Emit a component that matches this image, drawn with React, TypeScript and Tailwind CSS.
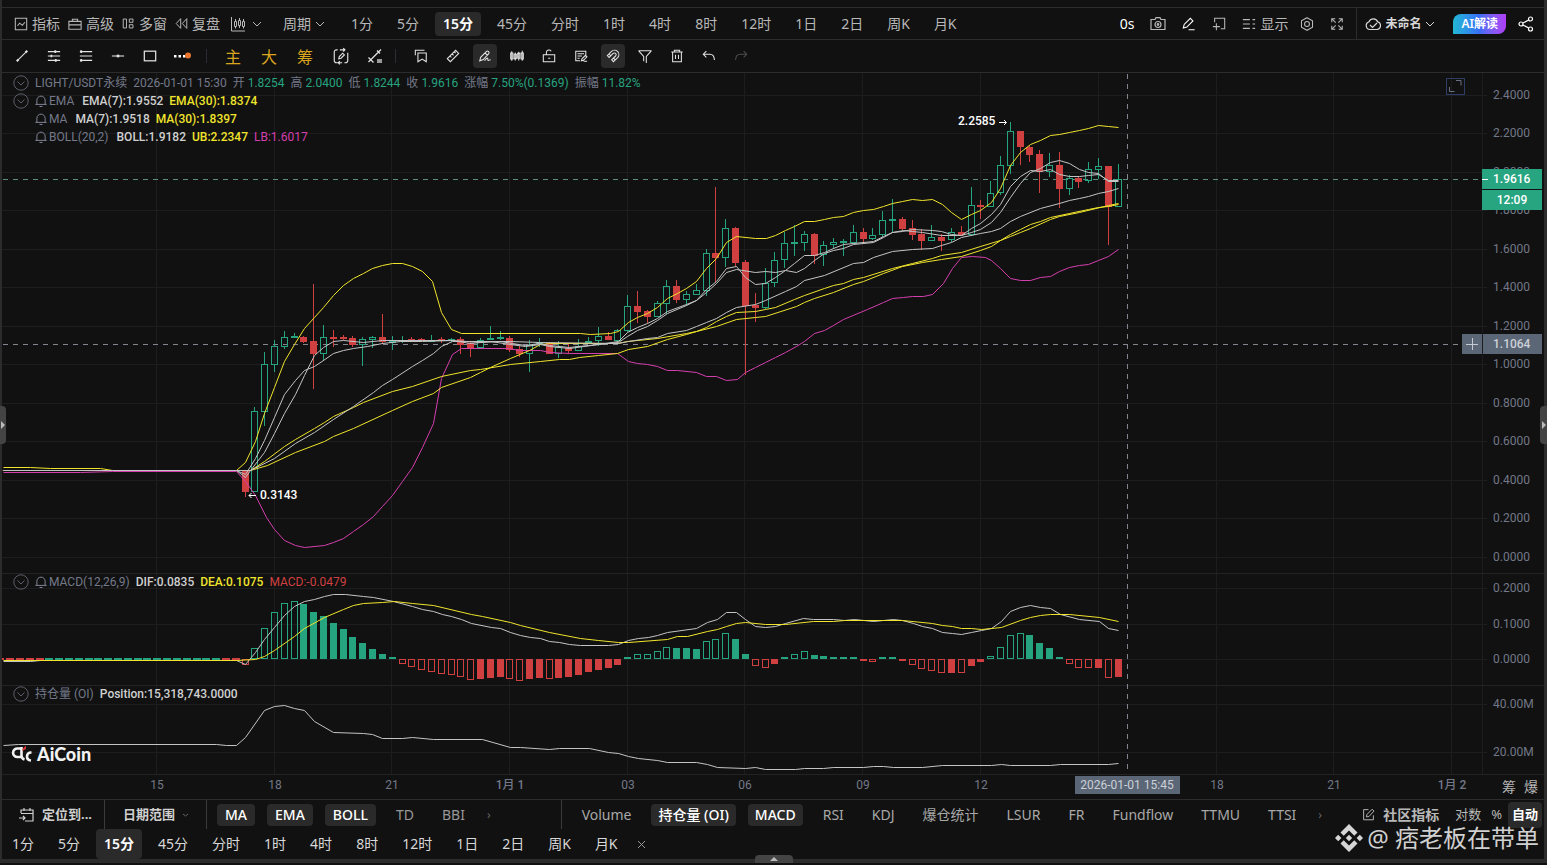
import React, { useState } from 'react';

const periods = ['1分', '5分', '15分', '45分', '分时', '1时', '4时', '8时', '12时', '1日', '2日', '周K', '月K'];
const mainIndicators = ['MA', 'EMA', 'BOLL', 'TD', 'BBI'];
const subIndicators = ['Volume', '持仓量 (OI)', 'MACD', 'RSI', 'KDJ', '爆仓统计', 'LSUR', 'FR', 'Fundflow', 'TTMU', 'TTSI'];

const GREEN = '#26a480';
const RED = '#d04040';
const YELLOW = '#f0e42c';
const WHITE = '#c4c4c4';
const PINK = '#d43fae';
const AXIS = '#737888';

const STEP = 9.81;
const xAt = (i: number) => Math.round(274 + STEP * i) + 0.5;

// [high, body top, body bottom, low, up] in chart units, first one is 17:15
const candles: [number, number, number, number, number][] = [
  [471, 471, 492, 497, 0], [407, 411, 492, 492, 1], [352, 364, 412, 426, 1], [340, 346, 365, 372, 1],
  [331, 337, 347, 349, 1], [333, 336, 337, 338, 1], [336, 337, 342, 343, 0], [284, 341, 354, 389, 0],
  [325, 337, 354, 361, 1], [330, 337, 339, 347, 0], [335, 337, 339, 340, 0], [336, 338, 345, 347, 0],
  [337, 339, 345, 366, 1], [336, 337, 340, 348, 1], [314, 337, 342, 344, 0], [336, 341, 342, 350, 1],
  [336, 340, 341, 343, 1], [337, 339, 341, 341, 0], [338, 339, 341, 342, 0], [335, 340, 341, 342, 1],
  [337, 339, 341, 343, 0], [338, 339, 341, 342, 1], [337, 339, 345, 354, 0], [342, 343, 348, 357, 0],
  [338, 340, 348, 348, 1], [326, 338, 340, 340, 1], [331, 337, 338, 340, 1], [336, 338, 350, 352, 0],
  [346, 349, 354, 357, 0], [340, 345, 354, 372, 1], [338, 342, 344, 347, 1], [342, 343, 354, 354, 0],
  [341, 347, 354, 358, 1], [343, 348, 351, 353, 0], [339, 346, 351, 351, 1], [337, 341, 342, 344, 1],
  [327, 336, 341, 346, 1], [332, 336, 340, 340, 0], [329, 330, 341, 342, 1], [295, 306, 331, 332, 1],
  [291, 306, 312, 323, 0], [310, 311, 317, 323, 0], [301, 303, 317, 317, 1], [280, 286, 304, 314, 1],
  [280, 286, 300, 303, 0], [291, 294, 300, 306, 1], [284, 290, 295, 295, 1], [249, 253, 291, 296, 1],
  [187, 253, 258, 282, 0], [219, 228, 258, 267, 1], [227, 228, 263, 266, 0], [260, 262, 306, 375, 0],
  [293, 305, 308, 322, 0], [268, 283, 308, 309, 1], [252, 260, 283, 287, 1], [232, 243, 260, 268, 1],
  [225, 242, 243, 256, 1], [231, 234, 243, 251, 1], [233, 234, 256, 264, 0], [241, 245, 255, 266, 1],
  [238, 242, 245, 249, 1], [239, 241, 242, 256, 1], [225, 232, 243, 244, 1], [228, 232, 239, 244, 0],
  [228, 235, 239, 240, 1], [211, 220, 235, 237, 1], [199, 219, 220, 232, 1], [217, 219, 229, 230, 0],
  [220, 228, 235, 240, 0], [229, 234, 241, 250, 0], [225, 237, 241, 241, 1], [234, 237, 241, 251, 0],
  [228, 232, 240, 242, 1], [226, 232, 235, 236, 0], [187, 205, 235, 236, 1], [200, 205, 207, 219, 0],
  [181, 193, 207, 207, 1], [156, 165, 193, 195, 1], [122, 131, 166, 174, 1], [131, 131, 147, 165, 0],
  [145, 147, 155, 162, 0], [150, 154, 172, 193, 0], [153, 165, 172, 177, 1], [152, 165, 189, 208, 0],
  [175, 178, 189, 195, 1], [177, 178, 182, 188, 0], [162, 169, 181, 183, 1], [158, 166, 170, 179, 1],
  [166, 166, 207, 245, 0], [164, 179, 207, 207, 1],
];

const upper = '3,467 30,467 50,468 100,468 112,470 236,470 245,462 255,441 264,413 274,387 284,361 294,344 304,328 314,317 323,307 333,295 343,285 353,278 363,273 372,268 382,265 392,263 402,263 412,266 422,271 432,281 441,312 451,329 461,333 580,333 590,334 610,333 618,331 628,322 637,317 647,313 657,307 667,298 677,293 686,288 696,281 706,268 716,258 726,242 736,236 755,238 766,238 775,235 785,230 794,226 804,221 814,221 824,219 833,217 843,216 853,212 863,210 873,209 883,206 892,203 902,201 912,199 922,200 932,199 942,204 951,212 961,219 971,214 980,210 991,202 1000,188 1010,165 1020,152 1030,144 1040,140 1050,135 1059,134 1069,132 1079,130 1088,128 1098,125 1108,126 1118,127';
const lower = '3,472 80,472 112,471 236,471 245,481 255,495 266,517 274,529 284,540 295,545 304,547 324,545 333,542 343,538 353,531 363,524 373,516 382,506 392,495 402,481 412,467 422,447 433,423 441,378 452,354 461,348 507,348 520,350 540,350 550,352 569,353 617,353 628,361 637,363 647,364 657,366 667,370 677,370 696,372 706,376 716,376 726,380 737,379 745,372 755,367 765,362 775,357 785,352 796,346 804,341 814,333 824,330 833,325 843,319 867,309 883,302 892,298 903,297 912,296 923,296 932,294 943,283 952,268 961,257 972,256 985,257 991,260 1000,268 1010,278 1020,280 1030,280 1040,277 1050,276 1059,271 1069,267 1079,265 1088,264 1098,260 1108,256 1118,249';
const ema7 = '3,470 236,470 245,474 255,458 264,440 274,417 284,394 295,380 304,370 314,366 323,360 333,353 343,350 353,348 367,346 382,343 400,341 422,341 452,340 480,342 500,341 512,343 525,345 539,343 549,345 569,347 598,344 618,341 627,332 637,327 647,323 657,318 667,311 686,304 696,300 706,289 716,281 726,268 736,266 745,277 755,284 765,283 775,277 785,270 794,263 804,255 814,255 824,252 833,248 843,244 853,243 873,241 883,236 892,232 903,230 912,231 922,232 941,235 961,235 971,228 980,223 991,214 1000,204 1010,186 1020,176 1030,170 1040,171 1050,169 1059,174 1069,176 1079,176 1088,175 1098,174 1108,180 1118,180';
const ma7 = '3,470 236,470 245,477 250,470 264,452 274,433 284,413 295,394 304,375 314,355 323,347 333,341 343,340 363,342 382,340 422,340 452,340 470,343 490,341 510,344 525,346 540,344 549,346 569,348 598,344 618,342 627,336 637,330 647,326 657,320 667,313 686,305 696,300 706,292 716,283 726,272 736,269 755,272 765,271 775,272 785,270 796,272 804,268 814,260 824,253 833,250 843,248 853,244 873,242 883,237 892,232 902,231 912,229 932,230 941,231 951,234 961,235 971,232 980,229 991,222 1000,212 1010,197 1020,183 1030,172 1040,168 1050,162 1059,160 1069,163 1079,169 1088,172 1098,173 1108,181 1118,181';
const bollMid = '3,470 236,470 250,470 274,458 295,443 314,432 333,419 353,406 373,392 382,385 392,379 412,366 422,360 433,353 441,346 452,341 510,341 540,342 618,343 628,341 647,338 657,337 667,333 686,330 696,326 706,322 716,318 726,312 736,307 755,304 765,300 785,291 796,286 804,280 824,275 853,263 863,262 873,257 892,251 912,249 932,248 941,245 951,242 961,237 980,233 991,231 1000,228 1010,221 1020,216 1040,208 1059,203 1069,200 1079,198 1088,196 1098,193 1108,191 1118,188';
const ema30 = '3,470 236,470 250,470 264,461 284,446 295,439 314,428 324,422 333,416 353,407 363,402 392,391 412,386 441,376 470,370 480,369 510,364 540,361 559,359 569,359 579,357 598,355 617,353 628,349 647,346 667,339 686,334 696,331 716,326 736,319 755,317 765,316 796,306 804,302 814,298 833,292 853,284 863,281 883,273 902,266 922,262 941,259 961,256 980,250 991,246 1000,240 1010,234 1020,229 1030,224 1040,221 1050,217 1069,213 1088,209 1098,207 1108,206 1118,204';
const ma30 = '3,470 236,470 250,470 267,465 295,452 324,441 333,436 353,428 392,410 412,401 433,393 441,387 470,377 480,372 490,367 510,358 529,350 540,344 550,343 617,343 627,341 657,338 686,333 696,331 706,327 716,321 726,316 736,312 755,311 765,309 775,307 794,299 804,295 824,288 833,285 843,283 853,279 863,277 892,268 912,263 932,258 941,255 961,252 980,246 1000,240 1010,236 1020,232 1030,228 1050,219 1059,216 1079,212 1108,205 1118,203';

const dif = '3,661 30,661 40,660 236,660 245,664 255,652 264,639 274,627 284,615 294,606 304,601 314,599 324,596 333,594 345,594 363,596 373,597 393,601 412,606 422,609 433,611 442,614 451,616 461,619 471,623 491,627 500,628 510,632 520,635 530,637 540,638 549,641 559,642 569,644 580,645 608,645 618,644 628,640 638,638 648,637 657,635 667,632 696,628 707,622 717,619 726,612 736,612 745,619 755,626 765,627 775,626 785,623 803,618 813,619 833,619 844,620 854,619 873,621 893,619 902,620 913,623 922,626 932,628 942,632 952,633 961,634 971,632 981,630 991,628 1001,621 1010,611 1020,607 1030,605 1040,607 1050,608 1060,614 1079,619 1099,621 1108,628 1118,630';
const dea = '3,660 236,660 255,659 264,656 274,650 294,636 304,628 324,617 343,609 353,605 363,603 382,602 394,601 412,603 433,605 471,614 482,616 510,622 520,625 549,632 580,638 598,640 618,642 628,642 667,639 677,636 687,636 707,631 717,629 726,626 736,623 745,622 765,624 785,624 813,621 833,621 844,620 902,620 932,623 942,625 952,626 961,628 971,628 981,629 1001,627 1020,620 1030,617 1040,615 1050,614 1069,614 1099,617 1118,621';
const position = '3,745 18,744 216,744 226,745 236,745 245,737 264,710 274,706 284,705 294,708 304,710 314,721 333,732 363,733 372,734 382,738 402,738 412,737 433,739 482,739 510,747 520,747 549,749 559,748 589,748 608,752 618,753 628,756 638,758 657,760 667,762 696,762 707,764 717,767 745,768 755,767 765,769 795,769 804,768 823,768 833,767 863,767 873,766 883,766 893,767 922,767 942,765 991,765 1001,764 1010,765 1050,765 1060,764 1108,764 1118,763';

// histogram edge for each bar from 17:15 on; negative sign = drawn hollow
const histogram = [
  -665, -648, -628, -612, -603, -601, 604, 612, 616, 623, 629, 637, 643, 649, 654, 657,
  -664, -667, -670, -672, -674, -675, -677, -680, 679, 678, 677, -679, -681, 679, 678, -679, 678, 677, 675, 672, 670, 668, 665,
  657, -654, -654, -651, -647, 648, 648, 649, -641, -639, -633, 639, 654, -666, -668, 664,
  657, -654, -651, 655, 656, 657, 657, 657, 661, -662, 657, 657, 661, -665, -669, -671, -673, 673, -673, 666, 662,
  -656, -647, -635, -633, 635, 643, 648, 657, -664, -668, -668, 668, -678, 677,
];

const timeTicks: [number, string][] = [
  [157, '15'], [275, '18'], [392, '21'], [510, '1月 1'], [628, '03'], [745, '06'], [863, '09'], [981, '12'],
  [1099, ''], [1217, '18'], [1334, '21'], [1452, '1月 2'],
];
const priceTicks: [number, string][] = [
  [95, '2.4000'], [133, '2.2000'], [172, '2.0000'], [210, '1.8000'], [249, '1.6000'], [287, '1.4000'], [326, '1.2000'],
  [364, '1.0000'], [403, '0.8000'], [441, '0.6000'], [480, '0.4000'], [518, '0.2000'], [557, '0.0000'],
  [588, '0.2000'], [624, '0.1000'], [659, '0.0000'], [704, '40.00M'], [752, '20.00M'],
];

interface IconProps {
  size?: number;
  className?: string;
  children: React.ReactNode;
}

const Icon = ({ size = 16, className = '', children }: IconProps) => (
  <svg width={size} height={size} viewBox="0 0 16 16" fill="none" stroke="currentColor" strokeWidth="1.2" className={`shrink-0 ${className}`} aria-hidden="true">
    {children}
  </svg>
);

const Chevron = ({ className = '' }: { className?: string }) => (
  <svg width="10" height="10" viewBox="0 0 10 10" fill="none" stroke="currentColor" className={`shrink-0 ${className}`} aria-hidden="true">
    <path d="M1 3l4 4 4-4" />
  </svg>
);

const Fold = () => (
  <button type="button" aria-label="折叠" className="w-4 h-4 text-[#5c5f69]">
    <Icon>
      <circle cx="8" cy="8" r="7.2" strokeWidth="1" />
      <path d="M4.5 6.5L8 10l3.5-3.5" strokeWidth="1" />
    </Icon>
  </button>
);

const Bell = () => (
  <Icon size={12} className="text-[#84899a]">
    <path d="M0.500 12.500h15M2.500 12.500V7a5.500 5.500 0 0111 0v5.500M6 15.300h4" strokeWidth="1.3" />
  </Icon>
);

const Line = ({ points, color }: { points: string; color: string }) => (
  <polyline points={points} fill="none" stroke={color} strokeWidth="1" transform="translate(0.5 0.5)" />
);

const drawTools = [
  <Icon><path d="M3.5 12.5l9-9" /><path d="M2 14l2-2M12 4l2-2" strokeWidth="2.4" /></Icon>,
  <Icon><path d="M1 3h14M1 8h14M1 13h14" /><path d="M8.500 3h2M4 8h2M9 13h2" strokeWidth="3" /></Icon>,
  <Icon><path d="M1 3h14M1 8h14M1 13h14" /><path d="M1.500 3h2M1.500 13h2" strokeWidth="3" /></Icon>,
  <Icon><path d="M1 8h14" /><path d="M6.500 8h3" strokeWidth="3" /></Icon>,
  <Icon><rect x="1.500" y="2.500" width="13" height="11" strokeWidth="1.4" /></Icon>,
];

const editTools = [
  { name: '收藏', icon: <Icon><path d="M1.500 7V1.500H12M4.500 4.500h9.500v10l-4.700-3-4.800 3z" /></Icon> },
  { name: '测量', icon: <Icon><path d="M1.500 11L11 1.500 14.500 5 5 14.500z M4.500 8l1.700 1.700M7 5.500l1.700 1.700M9.500 3.200l1.500 1.500" /></Icon> },
  { name: '连续画线', active: true, icon: <Icon><path d="M2 13.500l1-4L9.500 3a1.800 1.800 0 012.600 2.600L6 12l-4 1.500zM8 4.500l2.700 2.700M7.500 13.500c1-1.500 2.500-3.500 3.500-3s-.5 2.700.7 2.700 1.300-1 2.800-1" /></Icon> },
  { name: 'K线样式', icon: <Icon><path d="M2 2.500v11M6 4v9M10 3v10M14 2v11.500" /><path d="M.8 4.500h2.400v7H.8zM4.800 6h2.400v5H4.800zM8.800 5h2.400v5.500H8.800zM12.800 4.500h2.400v7h-2.400z" /></Icon> },
  { name: '锁定', icon: <Icon><path d="M1.500 6.500h13v8h-13zM5 6.500V4a3 3 0 015.500-1.500M7 10.500h2.500" /></Icon> },
  { name: '备注', icon: <Icon><path d="M7 13.500H2V2.500h11.500V7M4 5.500h7.500M4 8h5M4 10.500h2.500M8.500 13.500l.6-2.300 4-4 1.700 1.700-4 4zM11 14h4" /></Icon> },
  { name: '磁吸', active: true, icon: <Icon><path d="M1.500 7.500L6 3a5 5 0 017.300 7l-4.800 4.500-2-2.200L11 8a2 2 0 00-2.900-2.900L3.600 9.700zM3.500 5.700l2 2.200M8.500 10.200l2 2.300" /></Icon> },
  { name: '筛选', icon: <Icon><path d="M0.500 2h15M1 2.500l5.500 6v5.500M15 2.500l-5.500 6V16" /></Icon> },
  { name: '删除', icon: <Icon><path d="M1.500 3.500h13M5 3.500v-2h6v2M3 3.500v11h10v-11M6.300 6.500v5M9.700 6.500v5" /></Icon> },
  { name: '撤销', icon: <Icon><path d="M5 2.500L1.500 6 5 9.500M1.500 6H9c3 0 5 2 5.200 6.500" /></Icon> },
  { name: '重做', dim: true, icon: <Icon><path d="M11 2.500L14.500 6 11 9.500M14.500 6H7C4 6 2 8 1.800 12.500" /></Icon> },
];

const Chart = () => (
  <svg viewBox="2 73 1542 726" className="block w-full font-[Roboto,'Noto_Sans_CJK_SC',sans-serif] text-[12px]" role="img" aria-label="LIGHT/USDT K线图">
    <g stroke="#1d1d20" shapeRendering="crispEdges">
      {priceTicks.map(([y], i) => <path key={i} d={`M2 ${y + 0.5}H1487`} />)}
      {timeTicks.map(([x]) => <path key={x} d={`M${x - 0.5} 73V774`} />)}
      <path d="M1482.5 73V774" />
      <path d="M2 573.500H1544M2 685.500H1544M2 774.500H1544" stroke="#232326" />
    </g>

    <path d="M3 179.500H1482" stroke="#5d8f80" strokeDasharray="5 5" />
    <path d="M3 344.500H1460M1127.500 74V774" stroke="#85858f" strokeDasharray="5 5" />

    {/* flat part before the first move */}
    {Array.from({ length: 25 }, (_, n) => (
      <path key={n} d={`M${xAt(n - 28) - 4} 470.5h7`} stroke={n < 6 ? RED : GREEN} />
    ))}
    <g shapeRendering="crispEdges">
      {candles.map(([high, top, bottom, low, up], n) => {
        const x = xAt(n - 3);
        return (
          <g key={n} stroke={up ? GREEN : RED}>
            <path d={up ? `M${x} ${high}V${top}M${x} ${bottom}V${low}` : `M${x} ${high}V${low}`} />
            <rect x={x - 3} y={top + 0.5} width="6" height={Math.max(bottom - top - 1, 1)} fill={up ? 'none' : RED} />
          </g>
        );
      })}
    </g>
    <Line points={upper} color={YELLOW} />
    <Line points={lower} color={PINK} />
    <Line points={ema30} color={YELLOW} />
    <Line points={ma30} color={YELLOW} />
    <Line points={bollMid} color={WHITE} />
    <Line points={ema7} color={WHITE} />
    <Line points={ma7} color={WHITE} />

    <g fill="#fff" className="font-medium">
      <text x="958" y="125">2.2585</text>
      <text x="260" y="499">0.3143</text>
    </g>
    <path d="M999 122.500h7M1004 120l2.500 2.500-2.500 2.500M256 495.500h-7M251.500 493l-2.500 2.500 2.500 2.500" stroke="#fff" fill="none" />

    <g shapeRendering="crispEdges">
      {Array.from({ length: 25 }, (_, n) => (
        <path key={n} d={`M${xAt(n - 28) - 4} 659h8`} stroke={n < 5 || n > 22 ? RED : GREEN} strokeWidth="2" />
      ))}
      {histogram.map((v, n) => {
        const edge = Math.abs(v);
        const color = edge < 659 ? GREEN : RED;
        return (
          <rect
            key={n}
            x={xAt(n - 3) - 3}
            y={Math.min(edge, 659) + 0.5}
            width="6"
            height={Math.max(Math.abs(659 - edge) - 1, 1)}
            stroke={color}
            fill={v < 0 ? 'none' : color}
          />
        );
      })}
    </g>
    <Line points={dif} color={WHITE} />
    <Line points={dea} color={YELLOW} />
    <Line points={position} color={WHITE} />

    <g fill={AXIS}>
      {priceTicks.map(([y, label], i) => <text key={i} x="1493" y={y + 4}>{label}</text>)}
      {timeTicks.map(([x, label]) => <text key={x} x={x} y="789" textAnchor="middle" className={label.length > 2 ? 'font-medium' : ''}>{label}</text>)}
    </g>

    <path d="M1482 169h60v20h-60zM1482 190h60v20h-60z" fill="#27a480" />
    <path d="M1482 179.500h6" stroke="#fff" />
    <path d="M1462 334h20v20h-20zM1483 334h59v20h-59zM1075 776h105v18h-105z" fill="#5b6677" />
    <path d="M1466 344.500h12M1472.500 338v12" stroke="#c5cad2" />
    <g className="font-medium">
      <text x="1493" y="183" fill="#fff">1.9616</text>
      <text x="1512" y="204" fill="#fff" textAnchor="middle">12:09</text>
      <text x="1493" y="348" fill="#ccd0d6">1.1064</text>
      <text x="1127" y="789" fill="#ccd0d6" textAnchor="middle" className="font-normal">2026-01-01 15:45</text>
    </g>
    <g fill="#b5b5b5" className="text-[14px]">
      <text x="1502" y="792">筹</text>
      <text x="1524" y="792">爆</text>
    </g>

    <rect x="1446.500" y="78.500" width="18" height="16" fill="none" stroke="#2f3c63" />
    <path d="M1456 80.500h5v5M1449.500 87v4.500h5" fill="none" stroke="#6b7180" />

    {/* AiCoin mark */}
    <g fill="none" stroke="#f2f2f2" strokeWidth="2.600">
      <path d="M21 748.500h-3a4.300 4.300 0 100 8.500h3M21.500 747v8.500q0 3 3 4" />
      <path d="M31.500 752.500h-1q-3.500 .5-3.500 4t4 4" />
    </g>
    <path d="M22.500 749l3.500-3.500v3.500l-3.500 2z" fill="#d33434" />
    <text x="37" y="761" fill="#f2f2f2" className="font-[Lato,sans-serif] text-[18px] font-black">AiCoin</text>
  </svg>
);

const quote = [
  ['开', '1.8254'], ['高', '2.0400'], ['低', '1.8244'], ['收', '1.9616'], ['涨幅', '7.50%(0.1369)'], ['振幅', '11.82%'],
];

const App: React.FC = () => {
  const [period, setPeriod] = useState('15分');
  const [main, setMain] = useState(['MA', 'EMA', 'BOLL']);
  const [sub, setSub] = useState(['持仓量 (OI)', 'MACD']);

  const toggle = (list: string[], name: string) =>
    list.includes(name) ? list.filter(n => n !== name) : [...list, name];

  return (
    <div className="relative min-h-screen flex flex-col bg-[#111111] text-[#b8b8b8] text-sm whitespace-nowrap overflow-hidden font-['Noto_Sans','Noto_Sans_CJK_SC',sans-serif]">
      <div className="border-l-2 border-r-3 border-[#2c2c2c]">
        <div className="h-2 border-b border-[#2c2c2c]" />

        <header className="h-8 flex items-center border-b border-[#2c2c2c] pl-3">
          <div className="flex items-center gap-2">
            <button type="button" className="flex items-center gap-1">
              <Icon size={14}><path d="M1.500 1.500h13v13h-13zM4 10l2.500-3 3 2.500L12.500 6" /></Icon>指标
            </button>
            <button type="button" className="flex items-center gap-1">
              <Icon size={14}><path d="M1 5h14v9H1zM5 5V2.500h6V5M1 9h14" /></Icon>高级
            </button>
            <button type="button" className="flex items-center gap-1">
              <Icon size={13}><path d="M1.500 2.500h4v11h-4zM9 2.500h4.500v4H9zM9 9.500h4.500v4H9z" /></Icon>多窗
            </button>
            <button type="button" className="flex items-center gap-1">
              <Icon size={13}><path d="M7 2L1.500 8 7 14zM14.500 2L9 8l5.500 6z" /></Icon>复盘
            </button>
          </div>
          <button type="button" aria-label="K线类型" className="flex items-center gap-1.5 ml-2.5">
            <Icon><path d="M1.500 1v14H15M4.500 5.500h2v5h-2zM8.500 4.500h2v5h-2zM12.500 5.500h2v5h-2zM5.500 3v2.500M9.500 2v2.500M13.500 3v2.500M5.500 10.500v2M9.500 9.500v2.500M13.500 10.500v2" strokeWidth="1" /></Icon>
            <Chevron />
          </button>
          <button type="button" className="flex items-center gap-1 ml-[21px]">周期<Chevron /></button>
          <nav className="flex items-center ml-3.5">
            {periods.map(p => (
              <button
                key={p}
                type="button"
                onClick={() => setPeriod(p)}
                className={`mx-1 px-2 h-6 rounded ${p === period ? 'bg-[#2a2a2a] text-white font-semibold' : ''}`}
              >
                {p}
              </button>
            ))}
          </nav>
          <div className="flex items-center ml-auto h-full">
            <span className="text-white mr-4">0s</span>
            <button type="button" aria-label="截图" className="mr-4"><Icon><path d="M1 3.500h4l1-1.800h4l1 1.800h4v10H1z" /><circle cx="8" cy="8.500" r="3" /><circle cx="8" cy="8.500" r=".8" /></Icon></button>
            <button type="button" aria-label="编辑" className="mr-4 text-white"><Icon size={14}><path d="M1.500 12.500l1-4L9.500 1.500l3 3-7 7zM7.500 14.500h7" /></Icon></button>
            <button type="button" aria-label="添加" className="mr-4"><Icon size={14}><path d="M3 6V1.500h11.500v12H10M1 11h8M5 7v8" /></Icon></button>
            <button type="button" className="flex items-center gap-1 mr-3">
              <Icon size={14}><path d="M1 3h8M1 8h8M1 13h8M12 3h3M12 8h3M12 13h3" /></Icon>显示
            </button>
            <button type="button" aria-label="设置" className="mr-4"><Icon size={14}><path d="M8 .8l6.300 3.600v7.200L8 15.200l-6.300-3.600V4.400z" /><circle cx="8" cy="8" r="2.800" /></Icon></button>
            <button type="button" aria-label="全屏" className="mr-3"><Icon size={14}><path d="M2 6V2h4M10 2h4v4M14 10v4h-4M6 14H2v-4M2.500 2.500l4 4M13.500 2.500l-4 4M13.500 13.500l-4-4M2.500 13.500l4-4" /></Icon></button>
            <button type="button" className="h-full flex items-center gap-1 border-l border-[#2c2c2c] pl-2 text-xs font-semibold text-[#d8d8d8]">
              <Icon><path d="M5 13.500a4 4 0 01-1-7.800 4.800 4.800 0 018.800.2A3.900 3.900 0 0112 13.500zM5 9l2.500 2.500L12 7" /></Icon>未命名<Chevron />
            </button>
            <button type="button" className="ml-[18px] h-5 px-2 rounded-tl-lg rounded-br-lg bg-linear-to-r from-[#22b8d4] via-[#3a6df5] to-[#b03cf5] text-xs font-semibold text-white">AI解读</button>
            <button type="button" aria-label="分享" className="ml-3 mr-2.5 text-white"><Icon><circle cx="3" cy="8" r="2" /><circle cx="12.500" cy="3" r="2" /><circle cx="12.500" cy="13" r="2" /><path d="M5 7l5.700-3M5 9l5.700 3" /></Icon></button>
          </div>
        </header>

        <div className="h-[33px] flex items-center border-b border-[#2c2c2c] pl-1 text-[#e4e4e4]">
          {drawTools.map((tool, i) => (
            <button key={i} type="button" aria-label={`画线工具 ${i + 1}`} className="w-8 flex justify-center">
              {React.cloneElement(tool, { size: 14 } as Partial<IconProps>)}
            </button>
          ))}
          <button type="button" aria-label="更多" className="w-8 flex justify-center">
            <svg width="18" height="10" viewBox="0 0 18 10" aria-hidden="true">
              <path d="M1 4h2.500v2.500H1zM5.500 4H8v2.500H5.500zM10 4h2.500v2.500H10z" fill="#fff" />
              <circle cx="15" cy="4.500" r="3" fill="#e8732c" />
            </svg>
          </button>
          <span className="w-px h-3.5 bg-[#2c2c33] ml-2 mr-2" />
          {['主', '大', '筹'].map(name => (
            <button key={name} type="button" className="w-9 pt-0.5 text-base text-[#d9a520]">{name}</button>
          ))}
          <button type="button" aria-label="同步画线" className="w-9 flex justify-center">
            <Icon size={18}><path d="M5 2.500H4a2 2 0 00-2 2V12a2 2 0 002 2h1M7 2.500h4.500M10 1l1.500 1.500L10 4M11 14h1a2 2 0 002-2V5M9 14H5.500M7 12.500L5.500 14 7 15.500M6 10.500l.5-2 3-3 1.500 1.500-3 3z" strokeWidth="1" /></Icon>
          </button>
          <button type="button" aria-label="隐藏画线" className="w-8 flex justify-center">
            <Icon><path d="M1.500 14L14 1.500M1.500 9.500l5 5M10 2.500l3 3" /><path d="M10 13h5" strokeWidth="4" stroke="#9a9a9a" /></Icon>
          </button>
          <span className="w-px h-3.5 bg-[#2c2c33] ml-1 mr-[9px]" />
          {editTools.map(tool => (
            <span key={tool.name} className="w-8 flex justify-center">
              <button
                type="button"
                aria-label={tool.name}
                className={`w-6 h-6 rounded flex items-center justify-center ${tool.active ? 'bg-[#2a2a2a]' : ''} ${tool.dim ? 'text-[#4c4c4c]' : ''}`}
              >
                {React.cloneElement(tool.icon, { size: 14 } as Partial<IconProps>)}
              </button>
            </span>
          ))}
        </div>

        <main className="relative">
          <Chart />
          <div className="absolute left-[11px] top-[1px] font-[Roboto,'Noto_Sans_CJK_SC',sans-serif] text-xs/[18px] text-[#74798a]">
            <div className="flex items-center gap-1.5">
              <Fold />
              <span>LIGHT/USDT永续</span>
              <span>2026-01-01 15:30</span>
              {quote.map(([name, value]) => (
                <span key={name} className="flex gap-[3px]">{name}<span className="text-[#26a480]">{value}</span></span>
              ))}
            </div>
            <div className="flex items-center gap-1.5">
              <Fold />
              <span className="flex items-center gap-0.5 mr-0.5"><Bell />EMA</span>
              <span className="font-medium text-[#d0d0d0]">EMA(7):1.9552</span>
              <span className="font-medium text-[#f0e42c]">EMA(30):1.8374</span>
            </div>
            <div className="flex items-center gap-1.5 pl-[22px]">
              <span className="flex items-center gap-0.5 mr-0.5"><Bell />MA</span>
              <span className="font-medium text-[#d0d0d0]">MA(7):1.9518</span>
              <span className="font-medium text-[#f0e42c]">MA(30):1.8397</span>
            </div>
            <div className="flex items-center gap-1.5 pl-[22px]">
              <span className="flex items-center gap-0.5 mr-0.5"><Bell />BOLL(20,2)</span>
              <span className="font-medium text-[#d0d0d0]">BOLL:1.9182</span>
              <span className="font-medium text-[#f0e42c]">UB:2.2347</span>
              <span className="text-[#d43fae]">LB:1.6017</span>
            </div>
          </div>
          <div className="absolute left-[11px] top-[500px] flex items-center gap-1.5 font-[Roboto,'Noto_Sans_CJK_SC',sans-serif] text-xs/[18px] text-[#74798a]">
            <Fold />
            <span className="flex items-center gap-0.5"><Bell />MACD(12,26,9)</span>
            <span className="font-medium text-[#d0d0d0]">DIF:0.0835</span>
            <span className="font-medium text-[#f0e42c]">DEA:0.1075</span>
            <span className="text-[#d04040]">MACD:-0.0479</span>
          </div>
          <div className="absolute left-[11px] top-[612px] flex items-center gap-1.5 font-[Roboto,'Noto_Sans_CJK_SC',sans-serif] text-xs/[18px] text-[#74798a]">
            <Fold />
            <span>持仓量 (OI)</span>
            <span className="font-medium text-[#d0d0d0]">Position:15,318,743.0000</span>
          </div>
        </main>

        <div className="h-[30px] flex items-center border-t border-[#2c2c2c]">
          <button type="button" className="h-full flex items-center gap-2 pl-4 pr-3 border-r border-[#3a3a3a] text-[13px] font-bold text-[#d0d0d0]">
            <Icon><path d="M3 6V3h12v11H7M3 6.500h12M6 1v3M12 1v3M1 11h6M5 9l2 2-2 2" /></Icon>定位到...
          </button>
          <button type="button" className="h-full flex items-center gap-2 pl-[18px] pr-[18px] border-r border-[#3a3a3a] text-[13px] font-bold text-[#d0d0d0]">
            日期范围<svg width="5" height="4" viewBox="0 0 5 4" aria-hidden="true"><path d="M0 1l2.500 2L5 1" stroke="#666" fill="none" /></svg>
          </button>
          <div className="flex items-center ml-1">
            {mainIndicators.map(name => (
              <button
                key={name}
                type="button"
                onClick={() => setMain(toggle(main, name))}
                className={`mx-1.5 px-2 h-[22px] rounded leading-[22px] ${main.includes(name) ? 'bg-[#2a2a2a] text-white font-medium' : 'text-[#989898]'}`}
              >
                {name}
              </button>
            ))}
            <span className="ml-2 text-xs text-[#666]">›</span>
          </div>
          <div className="h-full flex items-center ml-[70px] pl-1.5 border-l border-[#3a3a3a]">
            {subIndicators.map(name => (
              <button
                key={name}
                type="button"
                onClick={() => setSub(toggle(sub, name))}
                className={`mx-1.5 h-[22px] rounded leading-[22px] ${sub.includes(name) ? 'px-[7px] bg-[#2a2a2a] text-white font-medium' : 'px-2 text-[#a8a8a8]'}`}
              >
                {name}
              </button>
            ))}
            <span className="ml-2 text-xs text-[#666]">›</span>
          </div>
          <div className="flex items-center ml-auto mr-0.5">
            <button type="button" className="flex items-center gap-2 mr-4 font-bold">
              <Icon size={13}><path d="M8 2H2v12.500h12V9M5.500 11l.5-3 6.500-6.500 2.300 2.300L8.500 10.500z" /></Icon>社区指标
            </button>
            <button type="button" className="text-[13px] mr-2.5">对数</button>
            <button type="button" className="text-[13px] mr-1.5">%</button>
            <button type="button" className="h-[26px] px-1 rounded bg-[#2a2a2a] text-[13px] font-semibold text-white">自动</button>
          </div>
        </div>

        <nav className="h-[30px] flex items-center -ml-0.5 text-[#d8d8d8]">
          {periods.map(p => (
            <button
              key={p}
              type="button"
              onClick={() => setPeriod(p)}
              className={`mx-1 px-2 h-full rounded ${p === period ? 'bg-[#2a2a2a] text-white font-semibold' : ''}`}
            >
              {p}
            </button>
          ))}
          <button type="button" aria-label="关闭" className="ml-2">
            <svg width="7" height="7" viewBox="0 0 7 7" stroke="#999" aria-hidden="true"><path d="M0 0l7 7M7 0L0 7" /></svg>
          </button>
        </nav>
      </div>
      <div className="relative h-1 bg-[#2c2c2c] flex justify-center">
        <button type="button" aria-label="展开面板" className="absolute bottom-0 w-[38px] h-2 rounded-t bg-[#444] flex items-center justify-center">
          <svg width="8" height="4" viewBox="0 0 8 4" aria-hidden="true"><path d="M0 4l4-4 4 4z" fill="#bbb" /></svg>
        </button>
      </div>

      <button type="button" aria-label="展开左侧" className="absolute left-0 top-[406px] w-1.5 h-[38px] rounded-r bg-[#444] flex items-center justify-center">
        <svg width="4" height="8" viewBox="0 0 4 8" aria-hidden="true"><path d="M0 0l4 4-4 4z" fill="#bbb" /></svg>
      </button>
      <button type="button" aria-label="展开右侧" className="absolute right-0 top-[406px] w-[7px] h-[38px] rounded-l bg-[#444] flex items-center justify-center">
        <svg width="4" height="8" viewBox="0 0 4 8" aria-hidden="true"><path d="M0 0l4 4-4 4z" fill="#bbb" /></svg>
      </button>

      <div className="absolute right-2 bottom-[10px] flex items-center gap-1 text-2xl/[34px] text-[#d0d0d0] pointer-events-none">
        <svg width="28" height="28" viewBox="0 0 28 28" fill="#d6d6d6" aria-hidden="true">
          <path d="M14 0l8.500 8.500-3.200 3.200L14 6.400l-5.300 5.300-3.200-3.200zM14 28l-8.500-8.500 3.200-3.200 5.300 5.300 5.300-5.300 3.200 3.200zM14 10.800l3.200 3.200-3.200 3.200-3.200-3.200zM3.200 10.800L6.400 14l-3.200 3.200L0 14zM24.800 10.800L28 14l-3.200 3.200-3.200-3.200z" />
        </svg>
        <span>@ 痞老板在带单</span>
      </div>
    </div>
  );
};

export default App;
